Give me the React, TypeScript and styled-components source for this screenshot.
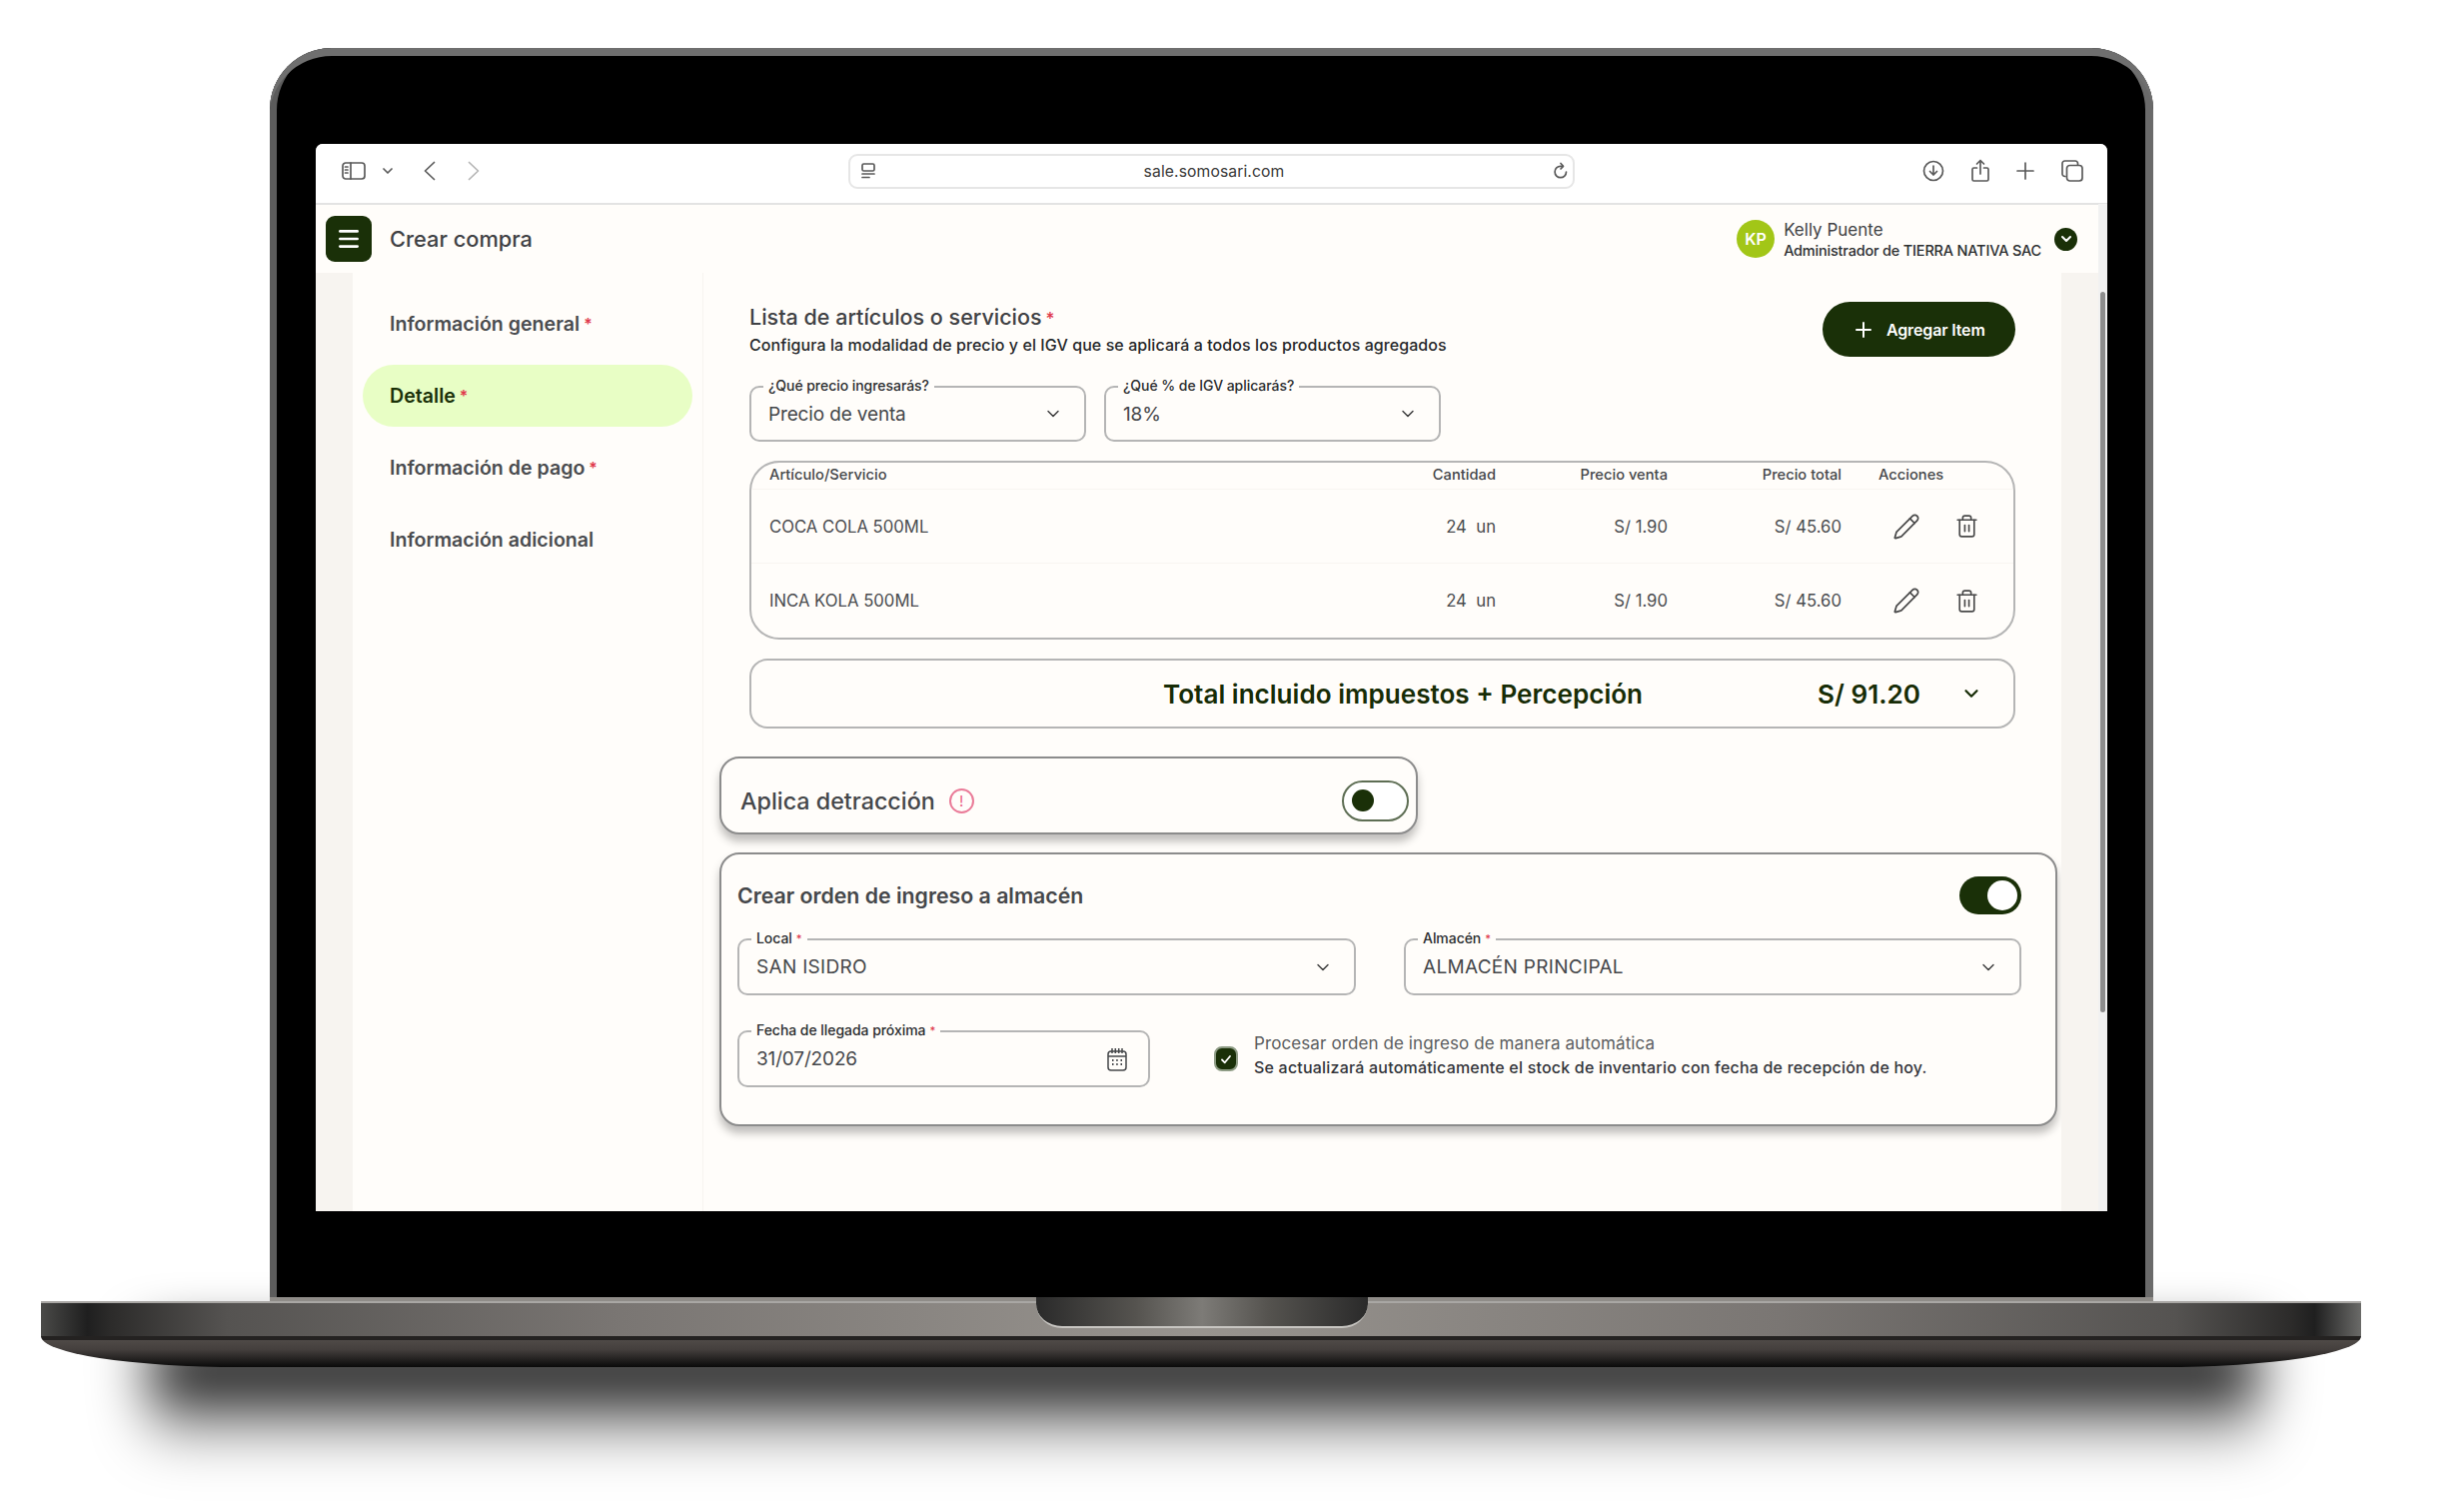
import React from "react";
import styled, { createGlobalStyle } from "styled-components";
import { ChevronDown, Pencil, Trash2, Plus, Menu } from "lucide-react";

const Global = createGlobalStyle`
  html, body { margin: 0; padding: 0; background: #fff; }
  * { box-sizing: border-box; }
  body { font-family: Inter, "Liberation Sans", sans-serif; }
`;

const Page = styled.div`
  position: relative;
  width: 2466px;
  height: 1512px;
  padding-top: 48px;
  overflow: hidden;
  background: #fff;
`;
const Lid = styled.div`
  position: relative;
  z-index: 2;
  width: 1885px;
  height: 1250px;
  margin-left: 270px;
  padding: 96px 46px 86px;
  background: #000;
  border-radius: 62px 62px 0 0;
  box-shadow: inset 0 9px 0 -1px #6f6f6f, inset 8px 0 0 -1px #5c5c5c, inset -9px 0 0 -1px #6a6a6a;
`;
const LidFoot = styled.div`
  position: relative;
  z-index: 2;
  width: 1885px;
  height: 4px;
  margin-left: 270px;
  background: #8f8c88;
`;
const Screen = styled.div`
  display: flex;
  flex-direction: column;
  height: 1068px;
  background: #fffdfa;
  border-radius: 7px 7px 0 0;
  overflow: hidden;
`;
const Toolbar = styled.div`
  display: flex;
  align-items: center;
  flex: none;
  height: 61px;
  padding: 0 24px 5px 26px;
  background: #fff;
  border-bottom: 2px solid #e3e3e3;
`;
const ToolIcon = styled.svg<{ $ml?: number }>`
  flex: none;
  margin-left: ${(p) => p.$ml ?? 0}px;
  fill: none;
  stroke: #5a5a5a;
  stroke-width: 1.7;
  stroke-linecap: round;
  stroke-linejoin: round;
`;
const UrlBar = styled.div`
  display: flex;
  align-items: center;
  justify-content: space-between;
  flex: none;
  width: 727px;
  height: 35px;
  margin-left: 369px;
  padding: 0 4px 0 11px;
  border: 2px solid #e6e6e6;
  border-radius: 9px;
`;
const UrlText = styled.span`
  font-size: 15.7px;
  color: #3a3a3a;
  letter-spacing: 0.1px;
`;
const TopBar = styled.div`
  display: flex;
  align-items: center;
  flex: none;
  height: 68px;
  padding: 0 8px 0 10px;
  background: #fffdfa;
`;
const MenuButton = styled.div`
  display: flex;
  align-items: center;
  justify-content: center;
  width: 46px;
  height: 46px;
  background: #1a3008;
  border-radius: 9px;
  color: #fff;
`;
const PageTitle = styled.div`
  margin-left: 18px;
  font-size: 21.8px;
  font-weight: 500;
  color: #3f4144;
`;
const UserBox = styled.div`
  display: flex;
  align-items: center;
  margin-left: auto;
  margin-right: 22px;
`;
const Avatar = styled.div`
  display: flex;
  align-items: center;
  justify-content: center;
  width: 38px;
  height: 38px;
  border-radius: 50%;
  background: #a2c617;
  color: #fff;
  font-size: 16px;
  font-weight: 600;
`;
const UserText = styled.div`
  margin-left: 9px;
  margin-top: 1px;
  display: flex;
  flex-direction: column;
  gap: 2px;
`;
const UserName = styled.div`
  font-size: 17px;
  line-height: 20px;
  color: #3f4144;
`;
const UserRole = styled.div`
  font-size: 14.5px;
  line-height: 18px;
  font-weight: 500;
  color: #2c2e30;
  letter-spacing: -0.2px;
`;
const UserChevron = styled.div`
  display: flex;
  align-items: center;
  justify-content: center;
  width: 23px;
  height: 23px;
  margin-left: 13px;
  border-radius: 50%;
  background: #1a3008;
  color: #fff;
`;
const Body = styled.div`
  position: relative;
  display: flex;
  flex: 1;
  min-height: 0;
`;
const LeftStrip = styled.div`
  flex: none;
  width: 37px;
  background: #f7f4f0;
`;
const Sidebar = styled.nav`
  display: flex;
  flex-direction: column;
  flex: none;
  gap: 10px;
  width: 351px;
  padding: 20px 10px 0 10px;
  border-right: 1px solid #f7f4f0;
`;
const NavItem = styled.div<{ $active?: boolean }>`
  display: flex;
  align-items: center;
  height: 62px;
  padding-left: 27px;
  border-radius: 31px;
  background: ${(p) => (p.$active ? "#e8fec5" : "transparent")};
  font-size: 19.6px;
  font-weight: 600;
  color: ${(p) => (p.$active ? "#1a3008" : "#4a4c4f")};
`;
const Req = styled.span`
  margin-left: 4px;
  color: #e0384b;
  font-size: 0.8em;
`;
const Main = styled.main`
  flex: none;
  width: 1359px;
  padding: 29px 4px 0 16px;
`;
const Section = styled.div`
  margin: 0 42px 0 30px;
`;
const HeaderRow = styled.div`
  display: flex;
  justify-content: space-between;
  height: 55px;
`;
const TitleBlock = styled.div`
  padding-top: 2px;
`;
const H2 = styled.div`
  font-size: 21.5px;
  line-height: 26px;
  font-weight: 500;
  color: #3f4144;
`;
const Sub = styled.div`
  margin-top: 3px;
  font-size: 16px;
  line-height: 20px;
  font-weight: 500;
  letter-spacing: 0.07px;
  color: #26282a;
`;
const AddButton = styled.div`
  display: flex;
  align-items: center;
  width: 193px;
  height: 55px;
  padding-left: 29px;
  gap: 11px;
  border-radius: 28px;
  background: #1a3008;
  color: #fff;
  font-size: 16px;
  font-weight: 600;
  letter-spacing: -0.15px;
`;
const FieldRow = styled.div<{ $mt: number; $gap: number }>`
  display: flex;
  gap: ${(p) => p.$gap}px;
  margin-top: ${(p) => p.$mt}px;
`;
const Field = styled.div<{ $w: number; $h?: number }>`
  position: relative;
  display: flex;
  align-items: center;
  justify-content: space-between;
  flex: none;
  width: ${(p) => p.$w}px;
  height: ${(p) => p.$h ?? 56}px;
  padding: 0 21px 0 17px;
  border: 2px solid #b5b5b5;
  border-radius: 10px;
  font-size: 19px;
  letter-spacing: -0.15px;
  color: #45474a;
`;
const UpperValue = styled.span`
  letter-spacing: 0.3px;
`;
const FieldLabel = styled.span`
  position: absolute;
  top: -11px;
  left: 12px;
  padding: 0 5px;
  background: #fffdfa;
  font-size: 14px;
  line-height: 18px;
  font-weight: 500;
  letter-spacing: -0.05px;
  color: #2c2e30;
`;
const TableBox = styled.div`
  margin-top: 19px;
  height: 179px;
  border: 2px solid #b5b5b5;
  border-radius: 30px;
  overflow: hidden;
`;
const Row = styled.div<{ $head?: boolean }>`
  display: grid;
  grid-template-columns: 630px 97px 172px 174px 1fr;
  align-items: center;
  height: ${(p) => (p.$head ? 27 : 74)}px;
  padding-left: 18px;
  padding-bottom: ${(p) => (p.$head ? 3 : 0)}px;
  border-bottom: 1px solid #f8f5f1;
  font-size: ${(p) => (p.$head ? 14.7 : 16.7)}px;
  font-weight: ${(p) => (p.$head ? 500 : 400)};
  color: ${(p) => (p.$head ? "#45474a" : "#4a4c4f")};
  &:last-child { border-bottom: 0; }
`;
const NumCell = styled.span`
  text-align: right;
  white-space: pre;
`;
const HeadActions = styled.span`
  padding-left: 37px;
`;
const Actions = styled.span`
  display: flex;
  align-items: center;
  gap: 34px;
  padding-left: 51px;
  color: #4a4a4a;
`;
const TotalBox = styled.div`
  display: flex;
  align-items: center;
  height: 70px;
  margin-top: 19px;
  padding: 0 31px 0 412px;
  border: 2px solid #b5b5b5;
  border-radius: 18px;
  font-size: 26.1px;
  font-weight: 600;
  color: #172c06;
`;
const TotalAmount = styled.span`
  margin-left: auto;
  margin-right: 40px;
`;
const DetractionCard = styled.div`
  display: flex;
  align-items: center;
  width: 699px;
  height: 78px;
  margin-top: 28px;
  padding: 10px 7px 0 19px;
  border: 2px solid #8c8c8c;
  border-radius: 20px;
  box-shadow: 0 7px 9px rgba(0, 0, 0, 0.25);
  background: #fffdfa;
`;
const CardTitle = styled.div`
  font-size: 23.3px;
  font-weight: 500;
  color: #45474a;
`;
const OrderTitle = styled.div`
  font-size: 21.3px;
  font-weight: 600;
  color: #45474a;
`;
const WarnIcon = styled.div`
  display: flex;
  align-items: center;
  justify-content: center;
  width: 25px;
  height: 25px;
  margin-left: 14px;
  border: 2px solid #ea7b98;
  border-radius: 50%;
  color: #ea5f84;
  font-size: 15px;
`;
const SwitchOff = styled.div`
  display: flex;
  align-items: center;
  width: 67px;
  height: 41px;
  margin-left: auto;
  padding-left: 8px;
  border: 2px solid #5e6e54;
  border-radius: 21px;
  background: #fff;
`;
const KnobOff = styled.div`
  width: 22px;
  height: 22px;
  border-radius: 50%;
  background: #1a3008;
`;
const OrderCard = styled.div`
  height: 274px;
  margin-top: 18px;
  padding: 22px 34px 0 16px;
  border: 2px solid #8c8c8c;
  border-radius: 20px;
  box-shadow: 0 7px 9px rgba(0, 0, 0, 0.25);
  background: #fffdfa;
`;
const OrderHead = styled.div`
  display: flex;
  align-items: center;
  justify-content: space-between;
`;
const SwitchOn = styled.div`
  display: flex;
  align-items: center;
  justify-content: flex-end;
  width: 62px;
  height: 38px;
  padding-right: 4px;
  border-radius: 19px;
  background: #1a3008;
`;
const KnobOn = styled.div`
  width: 30px;
  height: 30px;
  border-radius: 50%;
  background: #fff;
`;
const Check = styled.div`
  display: flex;
  align-items: center;
  justify-content: center;
  flex: none;
  align-self: center;
  width: 24px;
  height: 25px;
  margin: 0 16px 0 64px;
  border: 2px solid #8e9c85;
  border-radius: 8px;
  background: #1a3008;
  color: #fff;
`;
const CheckText = styled.div`
  display: flex;
  flex-direction: column;
  gap: 4px;
  align-self: center;
  margin-bottom: 7px;
`;
const CheckLine = styled.div`
  font-size: 17px;
  line-height: 20px;
  letter-spacing: 0.1px;
  color: #5b5d60;
`;
const CheckLineStrong = styled.div`
  font-size: 16px;
  line-height: 20px;
  font-weight: 500;
  letter-spacing: 0.2px;
  color: #33353a;
`;
const RightStrip = styled.div`
  position: relative;
  flex: 1;
  background: #f7f4f0;
`;
const ScrollTrack = styled.div`
  position: absolute;
  top: -69px;
  right: 0;
  bottom: 0;
  width: 9px;
  background: #f1f1f1;
`;
const ScrollThumb = styled.div`
  position: absolute;
  top: 88px;
  left: 2px;
  width: 5px;
  height: 721px;
  border-radius: 3px;
  background: #8d8d8d;
`;
const Base = styled.div`
  position: relative;
  z-index: 2;
  width: 2322px;
  margin-left: 41px;
`;
const BaseTop = styled.div`
  position: relative;
  height: 35px;
  border-top: 2px solid #a9a7a4;
  background: linear-gradient(90deg, #4a4a48 0, #1f1f1f 2%, #2c2b2a 3%, #555351 8%, #7a7673 25%, #98948f 50%, #7a7673 75%, #555351 92%, #2c2b2a 97%, #1f1f1f 98%, #6a6a68 100%);
`;
const Notch = styled.div`
  position: absolute;
  top: -6px;
  left: 996px;
  width: 332px;
  height: 31px;
  border-radius: 0 0 26px 26px / 0 0 24px 24px;
  border-bottom: 2px solid #c7c5c1;
  background: linear-gradient(90deg, #2a2a2a 0, #55534f 30%, #7d7b77 50%, #55534f 70%, #2a2a2a 100%);
`;
const BaseBottom = styled.div`
  height: 31px;
  border-top: 4px solid #242221;
  border-radius: 0 0 200px 200px / 0 0 31px 31px;
  background: linear-gradient(180deg, #4f4a47 0, #443f3d 35%, #0a0a0a 100%);
`;
const Shadow = styled.div`
  position: absolute;
  z-index: 1;
  top: 1340px;
  left: 150px;
  width: 2110px;
  height: 110px;
  background: linear-gradient(180deg, #000 0, #000 25%, rgba(0, 0, 0, 0.55) 58%, rgba(0, 0, 0, 0) 100%);
  filter: blur(28px);
`;
const CalendarIcon = styled.svg`
  fill: none;
  stroke: #45474a;
  stroke-width: 1.5;
`;

const Chev = () => <ChevronDown size={20} strokeWidth={1.7} color="#3a3a3a" />;

const Items = [
  { name: "COCA COLA 500ML" },
  { name: "INCA KOLA 500ML" },
];

export default function App() {
  return (
    <Page>
      <Global />
      <Shadow />
      <Lid>
        <Screen>
          <Toolbar>
            <ToolIcon width="24" height="18" viewBox="0 0 24 18">
              <rect x="1" y="1" width="22" height="16" rx="3" />
              <path d="M9 1v16M3.5 5h2.5M3.5 8h2.5M3.5 11h2.5" />
            </ToolIcon>
            <ToolIcon width="10" height="6" viewBox="0 0 10 6" $ml={17}>
              <path d="M1 1l4 4 4-4" />
            </ToolIcon>
            <ToolIcon width="12" height="20" viewBox="0 0 12 20" $ml={31}>
              <path d="M10.5 1.5L1.5 10l9 8.5" />
            </ToolIcon>
            <ToolIcon width="12" height="20" viewBox="0 0 12 20" $ml={32} style={{ stroke: "#b5b5b5" }}>
              <path d="M1.5 1.5l9 8.5-9 8.5" />
            </ToolIcon>
            <UrlBar>
              <ToolIcon width="14" height="16" viewBox="0 0 14 16">
                <rect x="1" y="1" width="12" height="7" rx="1.5" />
                <path d="M1 11h12M1 14.500h7" />
              </ToolIcon>
              <UrlText>sale.somosari.com</UrlText>
              <ToolIcon width="16" height="18" viewBox="0 0 16 18">
                <path d="M13.500 10a5.700 5.700 0 1 1-5.700-5.700h2" />
                <path d="M8 1.500l2.500 2.800L8 7" />
              </ToolIcon>
            </UrlBar>
            <ToolIcon width="22" height="22" viewBox="0 0 22 22" $ml={348}>
              <circle cx="11" cy="11" r="9.500" />
              <path d="M11 6v9M7.500 11.500L11 15l3.500-3.500" />
            </ToolIcon>
            <ToolIcon width="18" height="24" viewBox="0 0 18 24" $ml={27}>
              <path d="M5.500 9H2.500a1.500 1.500 0 0 0-1.500 1.500v10A1.500 1.500 0 0 0 2.500 22h13a1.500 1.500 0 0 0 1.500-1.500v-10A1.500 1.500 0 0 0 15.500 9h-3" />
              <path d="M9 15V1.500M5.500 5L9 1.500 12.500 5" />
            </ToolIcon>
            <ToolIcon width="18" height="18" viewBox="0 0 18 18" $ml={27}>
              <path d="M9 1v16M1 9h16" />
            </ToolIcon>
            <ToolIcon width="22" height="22" viewBox="0 0 22 22" $ml={27}>
              <path d="M4 16.500h-.5A2.500 2.500 0 0 1 1 14V3.500A2.500 2.500 0 0 1 3.500 1H14a2.500 2.500 0 0 1 2.500 2.500V5" />
              <rect x="5.500" y="5.500" width="15.500" height="15.500" rx="3" />
            </ToolIcon>
          </Toolbar>
          <TopBar>
            <MenuButton><Menu size={26} strokeWidth={2.4} /></MenuButton>
            <PageTitle>Crear compra</PageTitle>
            <UserBox>
              <Avatar>KP</Avatar>
              <UserText>
                <UserName>Kelly Puente</UserName>
                <UserRole>Administrador de TIERRA NATIVA SAC</UserRole>
              </UserText>
              <UserChevron><ChevronDown size={16} strokeWidth={3} /></UserChevron>
            </UserBox>
          </TopBar>
          <Body>
            <LeftStrip />
            <Sidebar>
              <NavItem>Información general<Req>*</Req></NavItem>
              <NavItem $active>Detalle<Req>*</Req></NavItem>
              <NavItem>Información de pago<Req>*</Req></NavItem>
              <NavItem>Información adicional</NavItem>
            </Sidebar>
            <Main>
              <Section>
                <HeaderRow>
                  <TitleBlock>
                    <H2>Lista de artículos o servicios<Req>*</Req></H2>
                    <Sub>Configura la modalidad de precio y el IGV que se aplicará a todos los productos agregados</Sub>
                  </TitleBlock>
                  <AddButton><Plus size={24} strokeWidth={2} />Agregar Item</AddButton>
                </HeaderRow>
                <FieldRow $mt={29} $gap={18}>
                  <Field $w={337}><FieldLabel>¿Qué precio ingresarás?</FieldLabel>Precio de venta<Chev /></Field>
                  <Field $w={337}><FieldLabel>¿Qué % de IGV aplicarás?</FieldLabel>18%<Chev /></Field>
                </FieldRow>
                <TableBox>
                  <Row $head>
                    <span>Artículo/Servicio</span>
                    <NumCell>Cantidad</NumCell>
                    <NumCell>Precio venta</NumCell>
                    <NumCell>Precio total</NumCell>
                    <HeadActions>Acciones</HeadActions>
                  </Row>
                  {Items.map((it) => (
                    <Row key={it.name}>
                      <span>{it.name}</span>
                      <NumCell>24  un</NumCell>
                      <NumCell>S/ 1.90</NumCell>
                      <NumCell>S/ 45.60</NumCell>
                      <Actions>
                        <Pencil size={28} strokeWidth={1.5} />
                        <Trash2 size={25} strokeWidth={1.6} />
                      </Actions>
                    </Row>
                  ))}
                </TableBox>
                <TotalBox>
                  Total incluido impuestos + Percepción
                  <TotalAmount>S/ 91.20</TotalAmount>
                  <ChevronDown size={22} strokeWidth={2.4} color="#172c06" />
                </TotalBox>
              </Section>
              <DetractionCard>
                <CardTitle>Aplica detracción</CardTitle>
                <WarnIcon>!</WarnIcon>
                <SwitchOff><KnobOff /></SwitchOff>
              </DetractionCard>
              <OrderCard>
                <OrderHead>
                  <OrderTitle>Crear orden de ingreso a almacén</OrderTitle>
                  <SwitchOn><KnobOn /></SwitchOn>
                </OrderHead>
                <FieldRow $mt={24} $gap={48}>
                  <Field $w={619} $h={57}><FieldLabel>Local<Req>*</Req></FieldLabel><UpperValue>SAN ISIDRO</UpperValue><Chev /></Field>
                  <Field $w={618} $h={57}><FieldLabel>Almacén<Req>*</Req></FieldLabel><UpperValue>ALMACÉN PRINCIPAL</UpperValue><Chev /></Field>
                </FieldRow>
                <FieldRow $mt={35} $gap={0}>
                  <Field $w={413} $h={57}>
                    <FieldLabel>Fecha de llegada próxima<Req>*</Req></FieldLabel>
                    31/07/2026
                    <CalendarIcon width="20" height="24" viewBox="0 0 20 24">
                      <rect x="1" y="4" width="18" height="19" rx="3" />
                      <path d="M1 9h18M5 1v5M8.300 1v5M11.700 1v5M15 1v5" />
                      <path d="M5 13h1.500M9.200 13h1.500M13.500 13h1.500M5 17h1.500M9.200 17h1.500M13.500 17h1.500" strokeWidth="2" />
                    </CalendarIcon>
                  </Field>
                  <Check>
                    <svg width="12" height="12" viewBox="0 0 12 12" fill="none" stroke="#fff" strokeWidth="1.800" strokeLinecap="round" strokeLinejoin="round">
                      <path d="M2 6.500l2.800 2.800L10 3" />
                    </svg>
                  </Check>
                  <CheckText>
                    <CheckLine>Procesar orden de ingreso de manera automática</CheckLine>
                    <CheckLineStrong>Se actualizará automáticamente el stock de inventario con fecha de recepción de hoy.</CheckLineStrong>
                  </CheckText>
                </FieldRow>
              </OrderCard>
            </Main>
            <RightStrip>
              <ScrollTrack><ScrollThumb /></ScrollTrack>
            </RightStrip>
          </Body>
        </Screen>
      </Lid>
      <LidFoot />
      <Base>
        <BaseTop><Notch /></BaseTop>
        <BaseBottom />
      </Base>
    </Page>
  );
}
